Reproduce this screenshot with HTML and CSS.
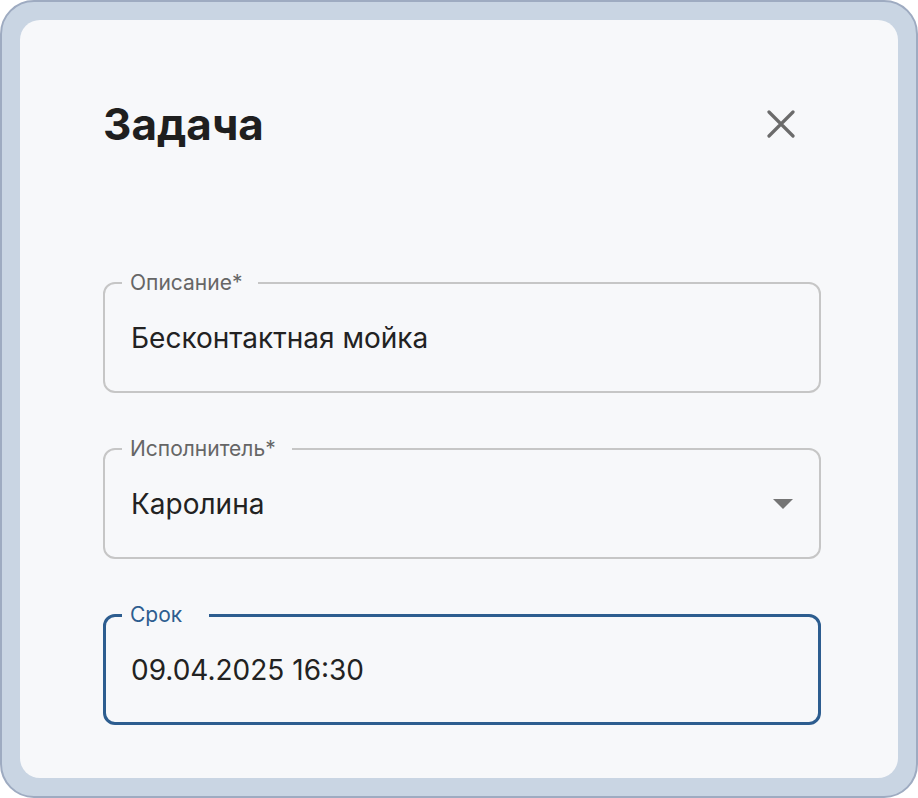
FILE: index.html
```html
<!DOCTYPE html>
<html lang="ru">
<head>
<meta charset="utf-8">
<title>Задача</title>
<link rel="stylesheet" href="styles.css">
</head>
<body>
<div class="frame">
  <div class="card">
    <div class="header">
      <h1 class="title">Задача</h1>
      <button class="close" type="button" aria-label="Закрыть">
        <svg width="28" height="28" viewBox="0 0 28 28"><path d="M2 2 L26 26 M26 2 L2 26" stroke="#6b6b6b" stroke-width="3.2" stroke-linecap="round" fill="none"/></svg>
      </button>
    </div>
    <div class="fields">
      <fieldset class="field">
        <legend class="label">Описание*</legend>
        <div class="value">Бесконтактная мойка</div>
      </fieldset>
      <fieldset class="field">
        <legend class="label">Исполнитель*</legend>
        <div class="value value--select">
          <span>Каролина</span>
          <svg class="caret" width="20" height="10" viewBox="0 0 20 10"><path d="M0 0 L20 0 L10 10 Z" fill="#757575"/></svg>
        </div>
      </fieldset>
      <fieldset class="field field--focused">
        <legend class="label label--short">Срок</legend>
        <div class="value">09.04.2025 16:30</div>
      </fieldset>
    </div>
  </div>
</div>
</body>
</html>
```
FILE: styles.css
```css
* { box-sizing: border-box; }
html, body { margin: 0; padding: 0; background: #ffffff; }
body { font-family: Inter, "Noto Sans", sans-serif; color: #222222; }

.frame {
  width: 918px;
  height: 798px;
  border: 2px solid #9eabc1;
  border-radius: 34px;
  background: #c9d5e3;
  padding: 18px;
}

.card {
  height: 758px;
  background: #f7f8fa;
  border-radius: 20px;
  padding: 78px 77px 0 83px;
  display: flex;
  flex-direction: column;
}

.header {
  display: flex;
  align-items: center;
  justify-content: space-between;
  margin-bottom: 121px;
}

.title {
  margin: 0;
  font-size: 44px;
  line-height: 52px;
  font-weight: 700;
  color: #1f1f1f;
}

.close {
  width: 40px;
  height: 40px;
  margin-right: 20px;
  padding: 0;
  border: 0;
  background: transparent;
  display: flex;
  align-items: center;
  justify-content: center;
}

.fields {
  display: flex;
  flex-direction: column;
  gap: 44px;
}

.field {
  margin: 0;
  padding: 0;
  min-width: 0;
  border: 2px solid #c6c6c6;
  border-radius: 12px;
}

.label {
  margin-left: 17px;
  padding: 0 16px 0 8px;
  font-size: 21px;
  line-height: 24px;
  color: #666666;
}

.label--short { padding-right: 27px; }

.value {
  padding: 26px 26px 36px 26px;
  font-size: 28px;
  line-height: 34px;
  color: #222222;
}

.value--select {
  display: flex;
  align-items: center;
  justify-content: space-between;
}

.caret { display: block; }

.field--focused {
  border: 3px solid #2d5d8f;
}

.field--focused .label {
  color: #2d5d8f;
  margin-left: 16px;
}

.field--focused .value {
  padding: 26px 25px 35px 25px;
}
```
